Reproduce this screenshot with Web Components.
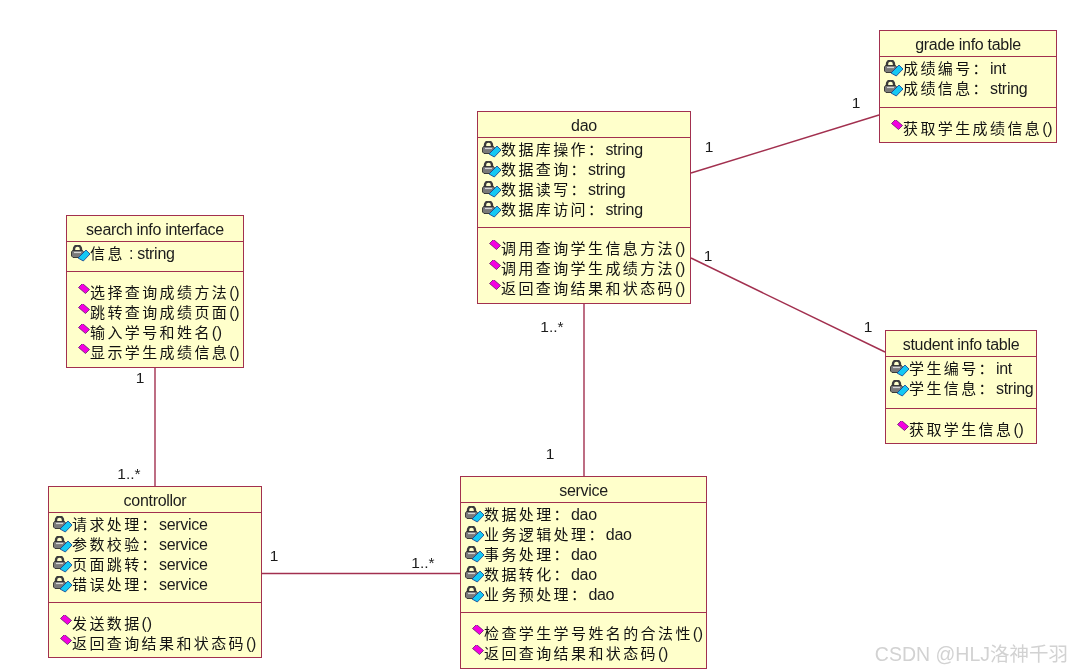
<!DOCTYPE html>
<html>
<head>
<meta charset="utf-8">
<style>
  html, body { margin: 0; background: #fff; }
  body { width: 1072px; height: 671px; overflow: hidden; }
</style>
</head>
<body>
<uml-diagram>
  <uml-class name="grade info table" x="879" y="30" w="178" h="113" attrs="51">
    <uml-row slot="attr" label="成绩编号：" type="int"></uml-row>
    <uml-row slot="attr" label="成绩信息：" type="string"></uml-row>
    <uml-row slot="op" kind="op" label="获取学生成绩信息" type="()"></uml-row>
  </uml-class>
  <uml-class name="dao" x="477" y="111" w="214" h="193" attrs="90">
    <uml-row slot="attr" label="数据库操作：" type="string"></uml-row>
    <uml-row slot="attr" label="数据查询：" type="string"></uml-row>
    <uml-row slot="attr" label="数据读写：" type="string"></uml-row>
    <uml-row slot="attr" label="数据库访问：" type="string"></uml-row>
    <uml-row slot="op" kind="op" label="调用查询学生信息方法" type="()"></uml-row>
    <uml-row slot="op" kind="op" label="调用查询学生成绩方法" type="()"></uml-row>
    <uml-row slot="op" kind="op" label="返回查询结果和状态码" type="()"></uml-row>
  </uml-class>
  <uml-class name="search info interface" x="66" y="215" w="178" h="153" attrs="30">
    <uml-row slot="attr" label="信息" type=" : string"></uml-row>
    <uml-row slot="op" kind="op" label="选择查询成绩方法" type="()"></uml-row>
    <uml-row slot="op" kind="op" label="跳转查询成绩页面" type="()"></uml-row>
    <uml-row slot="op" kind="op" label="输入学号和姓名" type="()"></uml-row>
    <uml-row slot="op" kind="op" label="显示学生成绩信息" type="()"></uml-row>
  </uml-class>
  <uml-class name="student info table" x="885" y="330" w="152" h="114" attrs="52">
    <uml-row slot="attr" label="学生编号：" type="int"></uml-row>
    <uml-row slot="attr" label="学生信息：" type="string"></uml-row>
    <uml-row slot="op" kind="op" label="获取学生信息" type="()"></uml-row>
  </uml-class>
  <uml-class name="controllor" x="48" y="486" w="214" h="172" attrs="90">
    <uml-row slot="attr" label="请求处理：" type="service"></uml-row>
    <uml-row slot="attr" label="参数校验：" type="service"></uml-row>
    <uml-row slot="attr" label="页面跳转：" type="service"></uml-row>
    <uml-row slot="attr" label="错误处理：" type="service"></uml-row>
    <uml-row slot="op" kind="op" label="发送数据" type="()"></uml-row>
    <uml-row slot="op" kind="op" label="返回查询结果和状态码" type="()"></uml-row>
  </uml-class>
  <uml-class name="service" x="460" y="476" w="247" h="193" attrs="110">
    <uml-row slot="attr" label="数据处理：" type="dao"></uml-row>
    <uml-row slot="attr" label="业务逻辑处理：" type="dao"></uml-row>
    <uml-row slot="attr" label="事务处理：" type="dao"></uml-row>
    <uml-row slot="attr" label="数据转化：" type="dao"></uml-row>
    <uml-row slot="attr" label="业务预处理：" type="dao"></uml-row>
    <uml-row slot="op" kind="op" label="检查学生学号姓名的合法性" type="()"></uml-row>
    <uml-row slot="op" kind="op" label="返回查询结果和状态码" type="()"></uml-row>
  </uml-class>
  <uml-mult x="856" y="103">1</uml-mult>
  <uml-mult x="709" y="147">1</uml-mult>
  <uml-mult x="708" y="256">1</uml-mult>
  <uml-mult x="868" y="327">1</uml-mult>
  <uml-mult x="552" y="327">1..*</uml-mult>
  <uml-mult x="550" y="454">1</uml-mult>
  <uml-mult x="140" y="378">1</uml-mult>
  <uml-mult x="129" y="474">1..*</uml-mult>
  <uml-mult x="274" y="556">1</uml-mult>
  <uml-mult x="423" y="563">1..*</uml-mult>
</uml-diagram>
<script>
const LATIN = '"Liberation Sans", Arial, sans-serif';

class UmlDiagram extends HTMLElement {
  constructor() {
    super();
    this.attachShadow({ mode: "open" });
    this.shadowRoot.innerHTML = `
      <style>
        :host { display: block; position: relative; width: 1072px; height: 671px; background: #fff; overflow: hidden; filter: blur(0.3px); }
        svg { position: absolute; left: 0; top: 0; }
        .mark {
          position: absolute; right: 4px; bottom: 4px;
          font: 19.5px "Liberation Sans", "Noto Sans CJK SC", sans-serif;
          color: #d2d2d2;
        }
      </style>
      <svg width="1072" height="671" stroke="#a2304f" stroke-width="1.4" fill="none">
        <line x1="691" y1="173" x2="879" y2="115"/>
        <line x1="691" y1="258" x2="885" y2="352"/>
        <line x1="584" y1="303" x2="584" y2="476"/>
        <line x1="155" y1="367" x2="155" y2="486"/>
        <line x1="261" y1="573.5" x2="460" y2="573.5"/>
      </svg>
      <slot></slot>
      <div class="mark">CSDN @HLJ洛神千羽</div>
    `;
  }
}

class UmlClass extends HTMLElement {
  constructor() {
    super();
    this.attachShadow({ mode: "open" });
    this.shadowRoot.innerHTML = `
      <style>
        :host {
          display: flex; flex-direction: column; box-sizing: border-box;
          position: absolute;
          background: #ffffcb; border: 1px solid #a2304f;
          color: #1c1c1c;
        }
        .name {
          flex: 0 0 23px; padding-top: 2px; display: flex; align-items: center; justify-content: center;
          font: 16px ${LATIN}; letter-spacing: -0.3px;
          border-bottom: 1px solid #a2304f; box-sizing: content-box;
        }
        .attrs { box-sizing: border-box; padding: 2px 0 0 4px; border-bottom: 1px solid #a2304f; }
        .ops { padding: 11px 0 0 11px; flex: 1; }
      </style>
      <div class="name"></div>
      <div class="attrs"><slot name="attr"></slot></div>
      <div class="ops"><slot name="op"></slot></div>
    `;
  }
  connectedCallback() {
    const a = (n) => this.getAttribute(n);
    this.style.left = a("x") + "px";
    this.style.top = a("y") + "px";
    this.style.width = a("w") + "px";
    this.style.height = a("h") + "px";
    this.shadowRoot.querySelector(".name").textContent = a("name");
    this.shadowRoot.querySelector(".attrs").style.height = a("attrs") + "px";
  }
}

const LOCK = `<svg width="19" height="18" viewBox="0 1 19 18">
  <path d="M3 7V5a3.5 3.5 0 0 1 7 0v2" fill="none" stroke="#3c3c3c" stroke-width="2.4"/>
  <path d="M1.5 6.5h10l1 1.5v4l-1.5 1.5H2L.5 12V8Z" fill="#7a7a7a" stroke="#2e2e2e" stroke-width=".9"/>
  <path d="M3 8.5h7" stroke="#d6d6d6" stroke-width="1.2"/>
  <path d="M15 6 19 10 12.3 17 7 14Z" fill="#14c8f4" stroke="#123a8c" stroke-width=".8"/>
</svg>`;
const DIAMOND = `<svg width="12" height="18" viewBox="0 1 12 18">
  <path d="M4.5 .5 11.5 6.5 7.5 10.5 .5 4.5Z" fill="#f400e0" stroke="#4a1060" stroke-width=".7"/>
</svg>`;

class UmlRow extends HTMLElement {
  constructor() {
    super();
    this.attachShadow({ mode: "open" });
    this.shadowRoot.innerHTML = `
      <style>
        :host { display: flex; align-items: center; height: 20px; white-space: nowrap; }
        .icon { display: flex; align-items: center; }
        .cjk { font: 15px/18px "Noto Sans CJK SC", sans-serif; letter-spacing: 2.4px; padding-bottom: 2px; color: #111; }
        .type { font: 16px ${LATIN}; letter-spacing: -0.3px; white-space: pre; }
      </style>
      <span class="icon"></span><span class="cjk"></span><span class="type"></span>
    `;
  }
  connectedCallback() {
    const op = this.getAttribute("kind") === "op";
    const root = this.shadowRoot;
    root.querySelector(".icon").innerHTML = op ? DIAMOND : LOCK;
    root.querySelector(".cjk").textContent = this.getAttribute("label");
    root.querySelector(".type").textContent = this.getAttribute("type");
  }
}

class UmlMult extends HTMLElement {
  constructor() {
    super();
    this.attachShadow({ mode: "open" });
    this.shadowRoot.innerHTML = `
      <style>
        :host { position: absolute; transform: translate(-50%, -50%); font: 15.5px ${LATIN}; color: #1c1c1c; }
      </style>
      <slot></slot>
    `;
  }
  connectedCallback() {
    this.style.left = this.getAttribute("x") + "px";
    this.style.top = this.getAttribute("y") + "px";
  }
}

customElements.define("uml-diagram", UmlDiagram);
customElements.define("uml-class", UmlClass);
customElements.define("uml-row", UmlRow);
customElements.define("uml-mult", UmlMult);
</script>
</body>
</html>
